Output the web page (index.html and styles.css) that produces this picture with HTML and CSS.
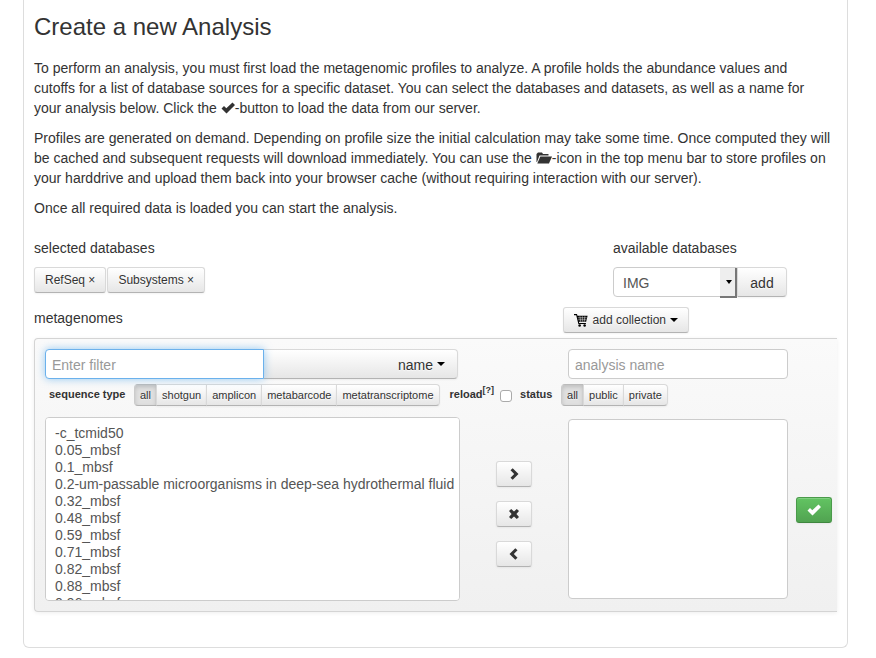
FILE: index.html
```html
<!DOCTYPE html>
<html lang="en">
<head>
<meta charset="utf-8">
<title>Create a new Analysis</title>
<link rel="stylesheet" href="styles.css">
</head>
<body>
<main class="panel">
  <h1>Create a new Analysis</h1>
  <p>To perform an analysis, you must first load the metagenomic profiles to analyze. A profile holds the abundance values and<br>cutoffs for a list of database sources for a specific dataset. You can select the databases and datasets, as well as a name for<br>your analysis below. Click the <svg class="icon" viewBox="0 0 14 14"><path d="M.5 7.500 3 5 5.300 7.200 11.500 1.500 14 4 5.500 12.500z"/></svg>-button to load the data from our server.</p>
  <p>Profiles are generated on demand. Depending on profile size the initial calculation may take some time. Once computed they will<br>be cached and subsequent requests will download immediately. You can use the <svg class="icon icon-folder" viewBox="0 0 16 14"><path d="M.5 11V3L2 1.500H6L7 3H12.500V4.500H3.500L1 11z"/><path d="M4.300 5.500H16L13 12.500H1.300z"/></svg>-icon in the top menu bar to store profiles on<br>your harddrive and upload them back into your browser cache (without requiring interaction with our server).</p>
  <p>Once all required data is loaded you can start the analysis.</p>

  <div class="split">
    <section class="selected">
      <h2>selected databases</h2>
      <div class="tags">
        <button type="button" class="btn small">RefSeq ×</button>
        <button type="button" class="btn small">Subsystems ×</button>
      </div>
    </section>
    <section class="available">
      <label for="db">available databases</label>
      <div class="join">
        <span class="picker"><select id="db"><option>IMG</option></select></span>
        <button type="button" class="btn add">add</button>
      </div>
    </section>
  </div>

  <div class="split collection-row">
    <h2 class="selected">metagenomes</h2>
    <div class="collection">
      <button type="button" class="btn small cart-btn">
        <svg class="cart" viewBox="0 0 16 15"><path d="M0 0H3.500L4.100 2H16L14.300 9H5.800L6.100 10.300H14V11.500H5.100L2.600 1.300H0z"/><path d="M4.500 4.300H15M5 6.600H14.600M7 2.500 7.700 9M9.800 2.500V9M12.800 2.500 12 9" fill="none" stroke="#f6f6f6" stroke-width=".6"/><circle cx="6.600" cy="13.300" r="1.500"/><circle cx="12.500" cy="13.300" r="1.500"/></svg>
        <span>add collection</span><i class="caret"></i>
      </button>
    </div>
  </div>

  <div class="well">
    <div class="source">
      <div class="join">
        <input class="filter" type="text" placeholder="Enter filter" aria-label="Enter filter" autofocus>
        <button type="button" class="btn field-btn">name<i class="caret"></i></button>
      </div>
      <div class="options">
        <strong class="type-label">sequence type</strong>
        <div class="group">
          <button type="button" class="btn mini active">all</button><button type="button" class="btn mini">shotgun</button><button type="button" class="btn mini">amplicon</button><button type="button" class="btn mini">metabarcode</button><button type="button" class="btn mini">metatranscriptome</button>
        </div>
        <label class="reload" for="reload">reload<sup>[?]</sup></label>
        <input type="checkbox" id="reload" class="check">
        <strong class="status-label">status</strong>
        <div class="group">
          <button type="button" class="btn mini active">all</button><button type="button" class="btn mini">public</button><button type="button" class="btn mini">private</button>
        </div>
      </div>
      <select class="list" multiple size="10" aria-label="metagenomes">
        <option>-c_tcmid50</option>
        <option>0.05_mbsf</option>
        <option>0.1_mbsf</option>
        <option>0.2-um-passable microorganisms in deep-sea hydrothermal fluid</option>
        <option>0.32_mbsf</option>
        <option>0.48_mbsf</option>
        <option>0.59_mbsf</option>
        <option>0.71_mbsf</option>
        <option>0.82_mbsf</option>
        <option>0.88_mbsf</option>
        <option>0.96_mbsf</option>
      </select>
    </div>
    <div class="moves">
      <button type="button" class="btn move" aria-label="Add"><svg class="icon" viewBox="0 0 14 14"><path d="M3.500 3.300 5.700 1.200 11.500 7 5.700 12.800 3.500 10.700 7.200 7z"/></svg></button>
      <button type="button" class="btn move" aria-label="Remove all"><svg class="icon" viewBox="0 0 14 14"><path d="M2 4 4.200 1.900 7 4.600 9.800 1.900 12 4 9.400 7 12 10 9.800 12.100 7 9.400 4.200 12.100 2 10 4.600 7z"/></svg></button>
      <button type="button" class="btn move" aria-label="Remove"><svg class="icon" viewBox="0 0 14 14"><path d="M10.500 3.300 8.300 1.200 2.500 7 8.300 12.800 10.500 10.700 6.800 7z"/></svg></button>
    </div>
    <div class="target">
      <input class="name" type="text" placeholder="analysis name" aria-label="analysis name">
      <select class="chosen" multiple aria-label="selected metagenomes"></select>
    </div>
    <div class="go">
      <button type="button" class="btn move success" aria-label="Load data"><svg class="icon" viewBox="0 0 14 14"><path d="M.5 7.500 3 5 5.300 7.200 11.500 1.500 14 4 5.500 12.500z"/></svg></button>
    </div>
  </div>
</main>
</body>
</html>
```
FILE: styles.css
```css
* { box-sizing: border-box; }
body {
  margin: 0;
  background: #fff;
  color: #333;
  font: 14px/20px "Liberation Sans", Arial, sans-serif;
}
.panel {
  margin: 0 28px 10px 23px;
  padding: 7px 10px 35px;
  border: 1px solid #ddd;
  border-top: 0;
  border-radius: 0 0 6px 6px;
}
h1 { margin: 0 0 11px; font-size: 24px; line-height: 40px; font-weight: 400; }
h2 { margin: 0; font-size: 14px; line-height: 20px; font-weight: 400; }
p { margin: 0 0 10px; white-space: nowrap; }
button, input, select { margin: 0; font-family: inherit; }
.icon { width: 14px; height: 14px; fill: currentColor; vertical-align: -2px; }
.icon-folder { width: 16px; }

.split { display: flex; padding-top: 10px; }
.selected { flex: 1; }
.available { width: 224px; }
.available label { display: block; }
.tags { display: flex; padding-top: 9px; }
.tags .btn + .btn { margin-left: 1px; }

.btn {
  border: 1px solid #ccc;
  border-color: #d9d9d9 #d9d9d9 #b3b3b3;
  border-radius: 4px;
  background: linear-gradient(#fff, #e6e6e6);
  box-shadow: inset 0 1px 0 rgba(255, 255, 255, .2), 0 1px 2px rgba(0, 0, 0, .05);
  color: #333;
  font-size: 14px;
  line-height: 20px;
  text-shadow: 0 1px 1px rgba(255, 255, 255, .75);
  white-space: nowrap;
}
.small { height: 26px; padding: 2px 10px; font-size: 12px; border-radius: 3px; }
.join { display: flex; }
.available .join { padding-top: 9px; }
.add { width: 50px; height: 30px; padding: 5px 0 3px; border-radius: 0 4px 4px 0; }
.picker { position: relative; width: 124px; }
.picker select {
  appearance: none;
  width: 100%;
  height: 30px;
  padding: 5px 9px 3px;
  border: 1px solid #ccc;
  border-radius: 4px 0 0 4px;
  background: #fff;
  color: #555;
  font-size: 14px;
}
.picker::after {
  content: "";
  position: absolute;
  top: 1px;
  right: 0;
  width: 15px;
  height: 28px;
  border: solid #777;
  border-width: 0 2px 2px 0;
  background: #eee;
  pointer-events: none;
}
.picker::before {
  content: "";
  position: absolute;
  z-index: 1;
  top: 13px;
  right: 5px;
  border: 3px solid transparent;
  border-top: 4px solid #000;
  border-bottom: 0;
  pointer-events: none;
}

.collection-row { height: 41px; padding-top: 11px; }
.collection { width: 274px; }
.cart-btn { display: flex; align-items: center; width: 126px; margin-top: -1px; }
.cart { width: 16px; height: 15px; margin-right: 5px; }
.caret {
  display: inline-block;
  margin-left: 4px;
  border: 4px solid transparent;
  border-top-color: #000;
  border-bottom: 0;
  vertical-align: 4px;
}

.well {
  display: flex;
  padding: 10px 0 10px 10px;
  border: 1px solid #d4d4d4;
  border-right: 0;
  border-radius: 4px 0 0 4px;
  background: linear-gradient(#fafafa, #f0f0f0);
  box-shadow: 0 1px 4px rgba(0, 0, 0, .065);
}
.source { width: 415px; }
.filter, .name {
  height: 30px;
  padding: 5px 6px 3px;
  border: 1px solid #ccc;
  border-radius: 4px;
  background: #fff;
  color: #555;
  font-size: 14px;
  line-height: 20px;
}
.filter {
  position: relative;
  width: 219px;
  border-color: #6bb1ec;
  border-radius: 4px 0 0 4px;
  outline: 0;
  box-shadow: 0 0 8px rgba(82, 168, 236, .6);
}
::placeholder { color: #999; opacity: 1; }
.field-btn {
  width: 195px;
  height: 30px;
  padding: 5px 12px 3px;
  margin-left: -1px;
  border-radius: 0 4px 4px 0;
  text-align: right;
}
.options {
  display: flex;
  height: 22px;
  margin-top: 5px;
  padding-left: 4px;
  font-size: 11px;
  line-height: 20px;
  white-space: nowrap;
}
.options > * { flex: none; }
.type-label { width: 85px; }
.group { display: flex; }
.mini {
  height: 22px;
  padding: 0 5px;
  border-radius: 0;
  font-size: 11px;
}
.mini + .mini { margin-left: -1px; }
.mini:first-child { border-radius: 4px 0 0 4px; }
.mini:last-child { border-radius: 0 4px 4px 0; }
.mini.active {
  background: #e0e0e0;
  border-color: #bbb #ccc #b3b3b3;
  box-shadow: inset 0 2px 4px rgba(0, 0, 0, .15);
}
.reload { margin-left: 10px; font-weight: 700; }
.reload sup { font-size: 9px; line-height: 0; }
.check {
  appearance: none;
  width: 12px;
  height: 12px;
  margin: 6px 8px 0 6px;
  border: 1px solid #aaa;
  border-radius: 3px;
  background: #fff;
}
.status-label { width: 41px; }
.list, .chosen {
  display: block;
  border: 1px solid #ccc;
  border-radius: 4px;
  background: #fff;
  color: #555;
  font-size: 14px;
  scrollbar-width: none;
}
.list { width: 415px; height: 184px; margin-top: 11px; padding: 7px 0 0 7px; }
.list option { min-height: 17px; padding: 0 2px 1px; }
.moves {
  display: flex;
  flex-direction: column;
  gap: 14px;
  width: 36px;
  margin: 112px 36px 0;
}
.move { width: 36px; height: 26px; padding: 2px 0; border-radius: 3px; }
.target { width: 220px; }
.name, .chosen { width: 100%; }
.chosen { height: 180px; margin-top: 40px; }
.go { margin: 148px 5px 0 8px; }
.success {
  border-color: #4a9a4a #4a9a4a #3f873f;
  background: linear-gradient(#62c462, #51a351);
  color: #fff;
}
```
